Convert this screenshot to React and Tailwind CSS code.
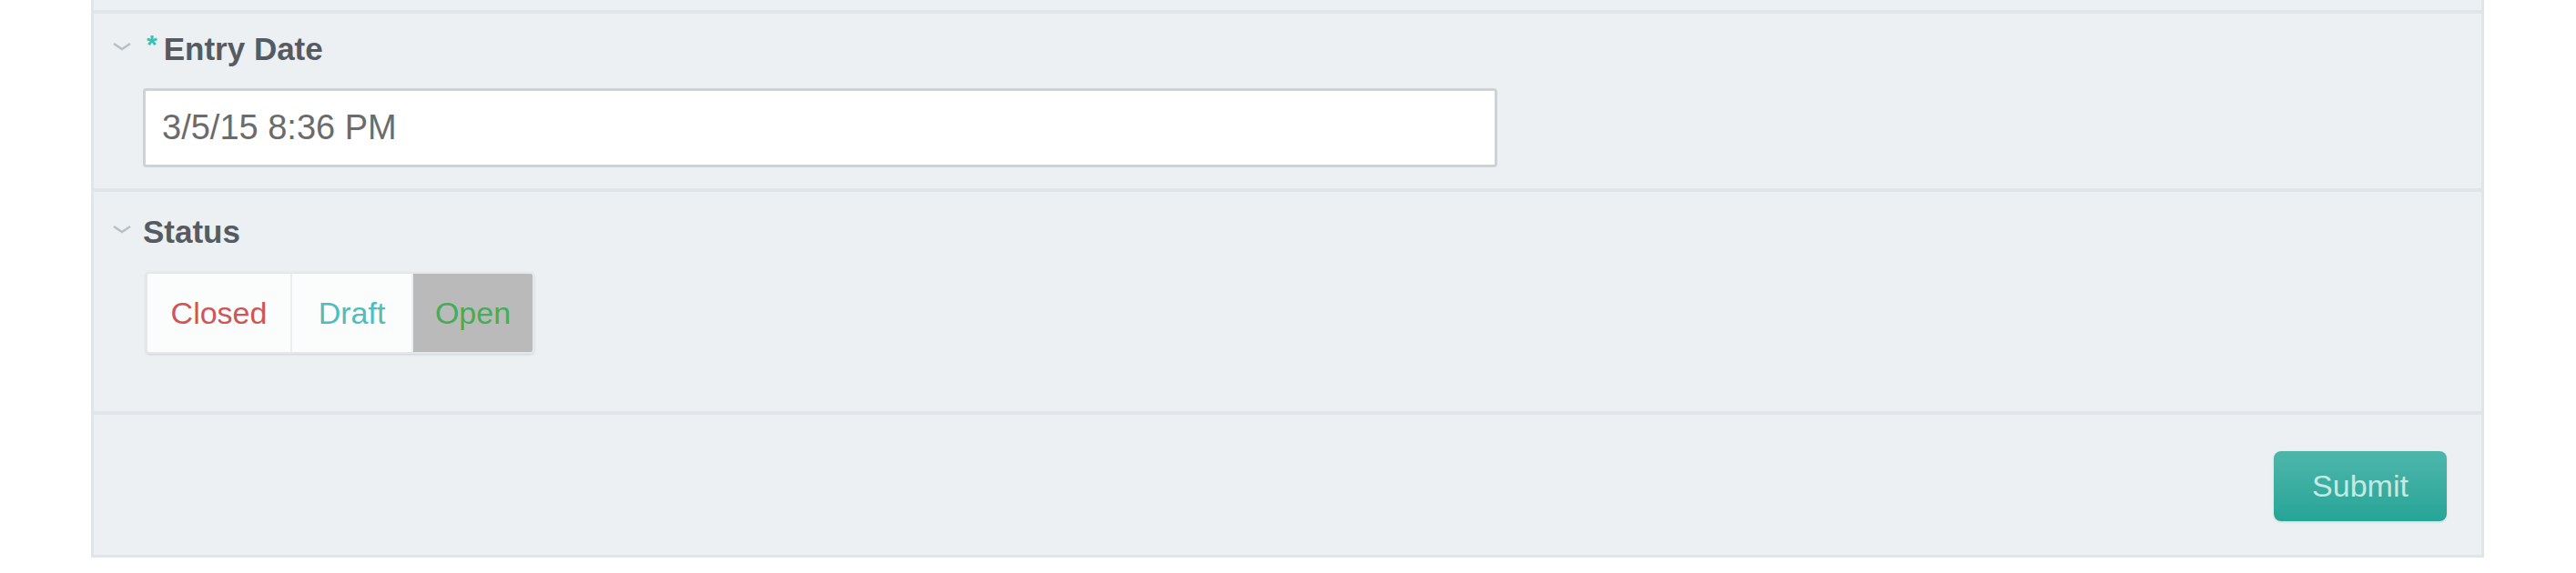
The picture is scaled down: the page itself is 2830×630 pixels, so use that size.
import { useState } from "react"

function Chevron() {
  return (
    <svg width="22" height="12" viewBox="0 0 22 12" className="-mt-[6px]">
      <polyline points="2,3 11,9 20,3" fill="none" stroke="#b8bfc5" strokeWidth="2.5" />
    </svg>
  )
}

function FieldLabel({ required, children }) {
  return (
    <div className="flex items-center h-[40px]">
      <div className="w-[34px] flex items-center justify-start">
        <Chevron />
      </div>
      {required && <span className="text-[30px] font-bold text-[#3dbfb1] ml-[4px] mr-[7px] -mt-[10px] leading-none">*</span>}
      <span className="text-[35px] font-bold text-[#555b61] leading-[40px]">{children}</span>
    </div>
  )
}

export default function App() {
  const [status, setStatus] = useState("Open")

  const options = [
    { name: "Closed", color: "text-[#d05656]", width: "w-[157px]" },
    { name: "Draft", color: "text-[#4fbcbd]", width: "w-[133px]" },
    { name: "Open", color: "text-[#45ad55]", width: "w-[133px]" },
  ]

  return (
    <div className="min-h-[630px] bg-white pl-[100px] pr-[101px] font-['Liberation_Sans',Arial,sans-serif]">
      <div className="bg-[#ecf0f3] border-x-[3px] border-b-[3px] border-[#e1e5e9]">
        {/* end of previous section */}
        <div className="h-[15px] border-b-4 border-[#e0e5e9]" />

        {/* Entry Date */}
        <div className="pt-[19px] pb-[23px] pl-[20px] border-b-4 border-[#e0e5e9]">
          <FieldLabel required>Entry Date</FieldLabel>
          <input
            readOnly
            value="3/5/15 8:36 PM"
            className="block ml-[34px] mt-[23px] w-[1488px] h-[87px] border-[3px] border-[#cdd2d6] rounded-[4px] bg-white px-[18px] text-[38px] text-[#6b6b6b] font-['Liberation_Sans',Arial,sans-serif] outline-none"
          />
        </div>

        {/* Status */}
        <div className="pt-[24px] pb-[63px] pl-[20px] border-b-4 border-[#e0e5e9]">
          <FieldLabel>Status</FieldLabel>
          <div className="ml-[37px] mt-[24px] flex w-fit rounded-[4px] border-2 border-[#e4e8eb] shadow-sm overflow-hidden">
            {options.map((o, i) => (
              <button
                key={o.name}
                onClick={() => setStatus(o.name)}
                className={`${o.width} h-[86px] text-[34px] ${o.color} ${status === o.name ? "bg-[#bababa]" : "bg-[#fbfcfc]"} ${i > 0 ? "border-l-2 border-[#eceff1]" : ""}`}
              >
                {o.name}
              </button>
            ))}
          </div>
        </div>

        {/* Footer */}
        <div className="flex justify-end pt-[40px] pb-[37px] pr-[38px]">
          <button className="w-[190px] h-[77px] rounded-[8px] bg-gradient-to-b from-[#4db6ab] to-[#24a597] text-[34px] text-[#c4eae4] shadow-sm">
            Submit
          </button>
        </div>
      </div>
    </div>
  )
}
